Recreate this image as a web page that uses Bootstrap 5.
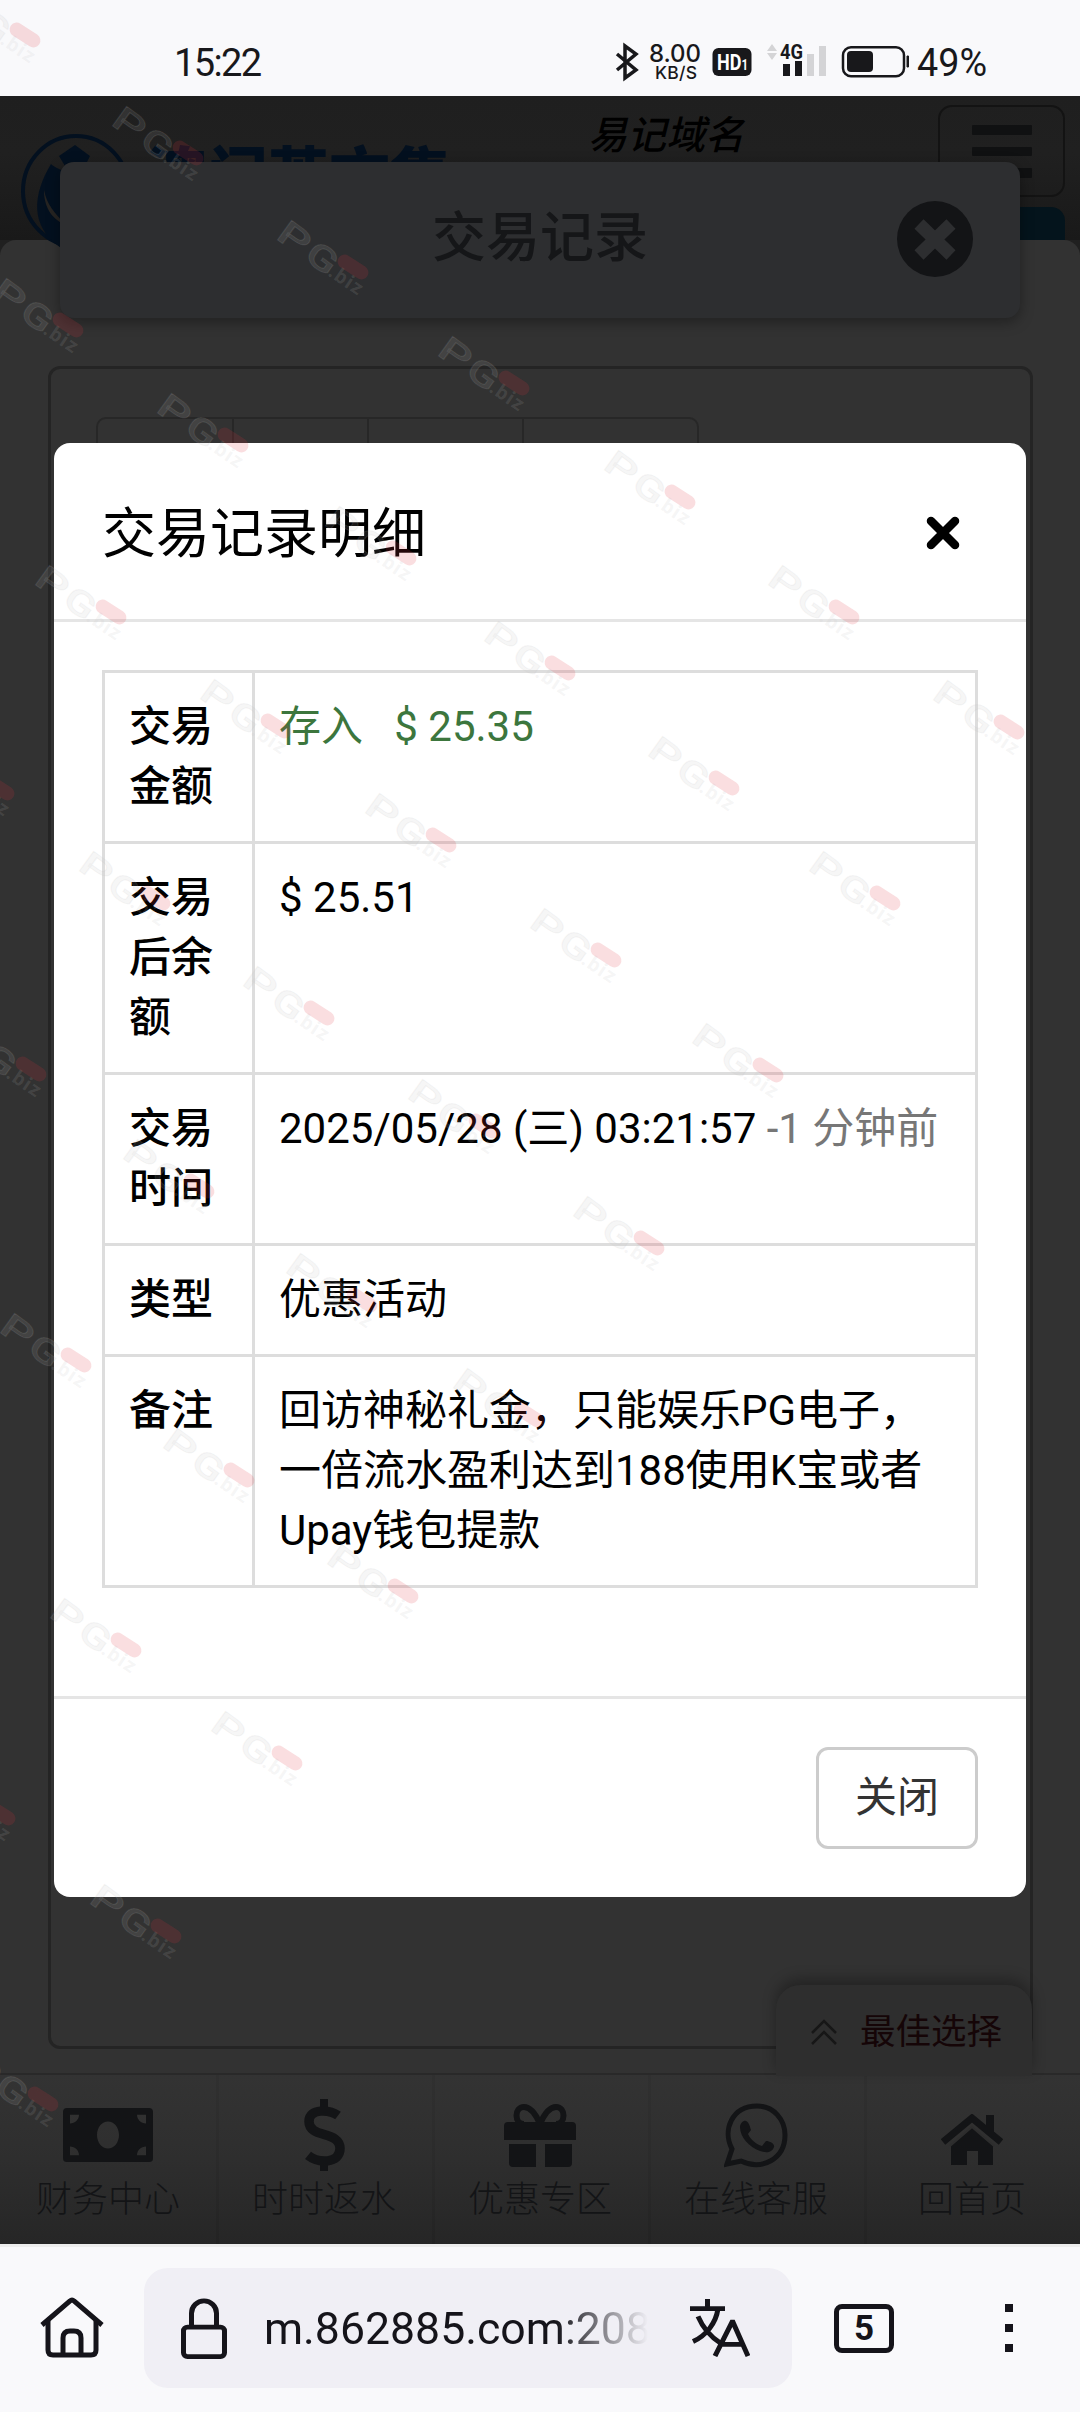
<!DOCTYPE html>
<html lang="zh-CN">
<head>
<meta charset="utf-8">
<meta name="viewport" content="width=device-width, initial-scale=1">
<title>交易记录</title>
<link href="https://cdn.jsdelivr.net/npm/bootstrap@5.3.0/dist/css/bootstrap.min.css" rel="stylesheet">
<style>
body{width:1080px;height:2412px;overflow:hidden;font-family:Roboto,"Noto Sans CJK SC",sans-serif;color:#000;background:#f9f9fb}
svg{display:block;flex:none}
.status-bar{height:96px;background:#f9f9fb;padding:0 91px 0 174px;color:#18181b}
.status-bar .clock{font-size:38px;line-height:38px;margin-top:44px;letter-spacing:-1.6px}
.page-view{height:2148px;background:#202020}
.site-head{height:144px;background:linear-gradient(#1f1f1f,#202020 40%,#191919);padding:9px 15px 0 21px}
.logo-mark{margin-top:29px}
.logo-name{font-size:61px;font-weight:900;color:#03101f;line-height:70px;margin:37px 0 0 9px;width:445px;height:72px}
.domain-tip{font-size:39px;font-style:italic;font-weight:500;line-height:44px;margin-top:9px;margin-left:-3px;white-space:nowrap;color:#000}
.menu-btn{width:127px;height:92px;border:2px solid #131313;border-radius:14px;gap:12px;padding-top:18px}
.menu-btn span{width:60px;height:9.500px;background:#101112;border-radius:1px}
.teal-tab{height:33px;width:127px;background:#04141c;border-radius:14px 14px 0 0;margin-top:10px}
.content-panel{background:#323232;border-radius:16px 16px 0 0;padding:126px 47px 0 48px;height:1833px}
.record-box{height:1683px;border:3px solid #242424;border-radius:12px;padding:48px 45px}
.filter-group{width:603px;height:112px;border:2px solid #272727;border-radius:10px}
.filter-group div+div{border-left:2px solid #272727}
.page-card{left:60px;top:162px;width:960px;height:156px;background:#2d2e30;border-radius:14px;box-shadow:0 4px 14px rgba(0,0,0,.35);padding-bottom:2px}
.page-card h1{font-size:54px;font-weight:500;line-height:60px;margin:0;color:#151618}
.page-card svg{right:46px;top:38px}
.bottom-nav{height:171px;border-top:2px solid #292929;background:linear-gradient(#333,#2e2e2e 50%,#262626);color:#131416}
.bottom-nav>div{width:216px;box-shadow:3px 0 0 rgba(0,0,0,.06)}
.bottom-nav .ico{height:105px}
.bottom-nav .lbl{font-size:36px;font-weight:300;line-height:40px}
.best-pick{left:776px;top:1985px;width:256px;height:91px;background:#2e2e2e;border-radius:24px 24px 0 0;box-shadow:0 -6px 14px rgba(0,0,0,.3);font-size:35.5px;color:#150507;gap:23px;padding:4px 0 0 35px}
.detail-modal{left:54px;top:443px;width:972px;height:1454px;background:#fff;border-radius:16px;overflow:hidden}
.detail-modal .modal-header{height:179px;padding:4px 66px 0 48px;border-bottom:3px solid #e5e5e5;border-radius:0}
.detail-modal .modal-title{font-size:54px;line-height:60px;font-weight:400;padding-top:4px}
.detail-modal .modal-body{padding:48px}
.detail-table{width:876px;margin:0 0 60px;border-collapse:collapse;font-size:42px;line-height:60px;color:#000;table-layout:fixed}
.detail-table th,.detail-table td{border:3px solid #ddd;padding:24px;vertical-align:top;font-weight:400}
.detail-table th{width:150px;font-weight:500;padding-right:20px}
.detail-modal .modal-footer{border-top:3px solid #e5e5e5;padding:48px;border-radius:0}
.close-btn{width:162px;height:102px;border:3px solid #ccc;border-radius:12px;font-size:42px;line-height:60px;color:#333;padding:0;margin:0}
.green-text{color:#3c763d}
.grey-text{color:#777}
.browser-bar{height:168px;border-top:3px solid #ededed;background:#f9f9fb;color:#15141a;padding:21px 67px 0 40px}
.url-pill{width:648px;height:120px;border-radius:24px;background:#f0eff5;margin-left:40px;padding:0 42px 0 37px}
.url-text{width:384px;overflow:hidden;font-size:44.6px;line-height:60px;margin-left:37px;padding-top:2px;white-space:nowrap;-webkit-mask-image:linear-gradient(90deg,#000 76%,transparent)}
.tab-count{width:60px;height:49px;border:5px solid #15141a;border-radius:8px;font-size:35px;font-weight:700;line-height:39px;margin:0 0 0 42px}
.menu-dots{gap:12px;margin-left:auto}
.menu-dots i{width:8px;height:8px;background:#15141a}
.brand-layer{left:0;top:0;pointer-events:none;z-index:5}
</style>
<script src="https://cdn.jsdelivr.net/npm/bootstrap@5.3.0/dist/js/bootstrap.bundle.min.js"></script>
</head>
<body class="position-relative">
<header class="status-bar d-flex justify-content-between">
  <div class="clock">15:22</div>
  <svg width="380" height="96" viewBox="610 0 380 96" fill="#18181b" font-family="Roboto,sans-serif">
    <path d="M618 54l19 16-11 8V46l11 8-19 16" fill="none" stroke="#18181b" stroke-width="3.500"/>
    <text x="650" y="62" font-family="Inter" font-weight="500" font-size="24" textLength="52">8.00</text>
    <text x="656" y="79" font-family="Inter" font-weight="500" font-size="17.500" textLength="42">KB/S</text>
    <rect x="713.500" y="48" width="39" height="28" rx="6"/>
    <text x="718" y="70" fill="#fff" font-weight="700" font-size="22" textLength="31" lengthAdjust="spacingAndGlyphs">HD<tspan font-size="14">1</tspan></text>
    <path d="M768 51l5-7 5 7zM768 53l5 7 5-7zM808 54h7v22h-7zM820 46h7v30h-7z" fill="#d4d4d6"/>
    <text x="781" y="59" font-weight="700" font-size="20" textLength="23" lengthAdjust="spacingAndGlyphs">4G</text>
    <path d="M784 64h7v12h-7zM796 61h7v15h-7z"/>
    <rect x="844" y="47.200" width="61" height="29" rx="8" fill="none" stroke="#18181b" stroke-width="2.500"/><rect x="848" y="51" width="26" height="21" rx="4"/><path d="M908 56h1.500v11H908z" stroke="#18181b"/>
    <text x="918" y="76" font-size="38" textLength="70" lengthAdjust="spacingAndGlyphs">49%</text>
  </svg>
</header>
<main class="page-view">
  <div class="site-head d-flex">
    <svg class="logo-mark" width="116" height="116" viewBox="0 0 116 116"><ellipse cx="55" cy="57" rx="53" ry="55" fill="none" stroke="#03101f" stroke-width="4"/><path d="M54 11l15 11-5 10c-6-4-14-4-20 0l-6-10z" fill="#03101f"/><path d="M30 30c-18 30-22 62 10 84h30V52c-8-12-32-14-40-22z" fill="#03101f"/><path d="M23 56c3 15 10 22 22 35-12-5-22-15-22-35z" fill="#262422"/></svg>
    <div class="logo-name">澳门英文集</div>
    <div class="domain-tip">易记域名</div>
    <div class="ms-auto">
      <div class="menu-btn d-flex flex-column align-items-center"><span></span><span></span><span></span></div>
      <div class="teal-tab"></div>
    </div>
  </div>
  <div class="content-panel">
    <div class="record-box d-flex align-items-start"><div class="filter-group d-flex"><div style="width:134px"></div><div style="width:135px"></div><div style="width:155px"></div><div class="flex-fill"></div></div></div>
  </div>
  <nav class="bottom-nav d-flex text-center">
    <div><div class="ico d-flex justify-content-center" style="padding-top:33px"><svg width="90" height="54" viewBox="0 0 90 56" preserveAspectRatio="none"><path fill-rule="evenodd" fill="#131416" d="M4 0h82a4 4 0 0 1 4 4v48a4 4 0 0 1-4 4H4a4 4 0 0 1-4-4V4a4 4 0 0 1 4-4zM45 14c-6 0-11 6-11 14s5 14 11 14 11-6 11-14-5-14-11-14zM7 7v9c5 0 9-4 9-9zM83 7v9c-5 0-9-4-9-9zM7 49v-9c5 0 9 4 9 9zM83 49v-9c-5 0-9 4-9 9z"/></svg></div><div class="lbl">财务中心</div></div>
    <div><div class="ico d-flex justify-content-center" style="padding-top:24px"><svg width="42" height="72" viewBox="0 0 42 74" preserveAspectRatio="none"><path d="M35 17C27 11 6 9 6 23c0 18 31 9 31 28 0 16-22 15-32 7" fill="none" stroke="#131416" stroke-width="9.500"/><path d="M17 0h8v14h-8zM17 60h8v14h-8z" fill="#131416"/></svg></div><div class="lbl">时时返水</div></div>
    <div><div class="ico d-flex justify-content-center" style="padding-top:25px"><svg width="72" height="74" viewBox="0 0 72 74"><g fill="none" stroke="#131416" stroke-width="6"><path d="M36 24C30 10 24 7 20 7c-10 0-10 17 0 17M36 24C42 10 48 7 52 7c10 0 10 17 0 17"/></g><path d="M4 22h64a4 4 0 0 1 4 4v14H0V26a4 4 0 0 1 4-4zM5 44h27v23H9a4 4 0 0 1-4-4zM41 44h27v19a4 4 0 0 1-4 4H41z" fill="#131416"/></svg></div><div class="lbl">优惠专区</div></div>
    <div><div class="ico d-flex justify-content-center" style="padding-top:28px"><svg width="64" height="66" viewBox="0 0 64 66"><path d="M3 61l5-15C-2 27 8 3 33 3c17 0 28 14 28 29 0 24-23 36-44 26z" fill="none" stroke="#131416" stroke-width="5"/><path d="M16 24c0-4 4-7 6-6 3 1 4 6 5 9l-3 4c3 6 8 10 14 12l4-5c4 0 9 3 8 6-2 6-8 6-14 4-11-4-20-14-20-24z" fill="#131416"/></svg></div><div class="lbl">在线客服</div></div>
    <div><div class="ico d-flex justify-content-center" style="padding-top:39px"><svg width="62" height="52" viewBox="0 0 62 52"><path d="M2 28L31 4l29 24" fill="none" stroke="#131416" stroke-width="7"/><path d="M45 1h8v20l-8-7zM10 31l21-18 21 18v20H37V37H26v14H10z" fill="#131416"/><path d="M9 32l22-19 22 19" fill="none" stroke="#2d2d2d" stroke-width="2"/></svg></div><div class="lbl">回首页</div></div>
  </nav>
</main>
<footer class="browser-bar d-flex align-items-start">
  <svg width="64" height="120" viewBox="0 0 64 120" fill="none" stroke="#15141a" stroke-width="5"><path d="M2 57l28-24q2-2 4 0l28 24"/><path d="M8 53v29q0 5 5 5h38q5 0 5-5V53M23 87V70q0-7 7-7h4q7 0 7 7v17"/></svg>
  <div class="url-pill d-flex align-items-center">
    <svg width="46" height="61" viewBox="0 0 46 64" preserveAspectRatio="none" fill="none" stroke="#15141a" stroke-width="5"><rect x="2.500" y="30.500" width="41" height="31" rx="4"/><path d="M10.500 30V16a12.500 13 0 0 1 25 0v14"/></svg>
    <div class="url-text">m.862885.com:2083</div>
    <svg class="ms-auto" width="60" height="58" viewBox="0 0 60 60" preserveAspectRatio="none" fill="none" stroke="#15141a" stroke-width="5"><path d="M0 10h35M17.500 0v10M28 10C26 25 16 38 3 44M8 18c5 12 12 21 23 28M25 59l17-35h1l15 35M32 47h22"/></svg>
  </div>
  <div class="d-flex align-items-center flex-fill" style="height:120px"><div class="tab-count text-center">5</div><div class="menu-dots d-flex flex-column"><i></i><i></i><i></i></div></div>
</footer>

<div class="page-card position-absolute d-flex align-items-center justify-content-center"><h1>交易记录</h1>
  <svg class="position-absolute" width="78" height="78" viewBox="0 0 78 78"><circle cx="39" cy="39" r="38" fill="#131416"/><path d="M23 24l32 31M55 24L23 55" stroke="#2d2e30" stroke-width="13"/></svg>
</div>
<div class="best-pick position-absolute d-flex align-items-center"><svg width="26" height="28" viewBox="0 0 26 28" fill="none" stroke="#171717" stroke-width="2.500"><path d="M1 14L13 2l12 12M1 25l12-12 12 12"/></svg><span>最佳选择</span></div>

<section class="detail-modal position-absolute" role="dialog">
  <div class="modal-header d-flex justify-content-between align-items-center"><h2 class="modal-title">交易记录明细</h2><svg width="34" height="34" viewBox="0 0 34 34"><path d="M5 5l24 24M29 5L5 29" stroke="#000" stroke-width="8.500" stroke-linecap="round"/></svg></div>
  <div class="modal-body">
    <table class="detail-table">
      <tr><th>交易金额</th><td class="green-text">存入 &nbsp; $ 25.35</td></tr>
      <tr><th>交易后余额</th><td>$ 25.51</td></tr>
      <tr><th>交易时间</th><td class="text-nowrap">2025/05/28 (三) 03:21:57 <span class="grey-text">-1 分钟前</span></td></tr>
      <tr><th>类型</th><td>优惠活动</td></tr>
      <tr><th>备注</th><td>回访神秘礼金，只能娱乐PG电子，一倍流水盈利达到188使用K宝或者Upay钱包提款</td></tr>
    </table>
  </div>
  <div class="modal-footer d-flex justify-content-end"><button type="button" class="btn close-btn">关闭</button></div>
</section>

<svg class="brand-layer position-absolute" width="1080" height="2412" viewBox="0 0 1080 2412">
  <defs><g id="mark-pg" font-family="Roboto,sans-serif" font-weight="500" fill="#bebebe" fill-opacity=".15">
    <g transform="translate(-16 20) rotate(36)" stroke="#bebebe" stroke-opacity=".12" stroke-width="1"><text transform="translate(-2 0) scale(1.5 1)" font-size="34">P</text><text transform="translate(33 0) scale(1.35 1)" font-size="34">G</text></g>
    <text transform="translate(35 56) rotate(34)" font-size="20" font-weight="700" letter-spacing="1.500">.biz</text>
    <rect x="-17" y="-7" width="34" height="14" rx="7" transform="translate(61 48) rotate(33)" fill="#e03040" fill-opacity=".16"/></g></defs>
</svg>
<script>
const layer=document.querySelector('.brand-layer');
[[-34,-13],[129,105],[294,219],[455,335],[9,277],[174,392],[342,505],[621,449],[785,564],[950,679],[501,620],[665,735],[826,850],[52,564],[217,678],[382,792],[547,907],[709,1022],[-60,740],[96,850],[260,965],[425,1078],[590,1195],[-28,1021],[140,1138],[303,1252],[470,1367],[17,1312],[180,1427],[344,1543],[67,1597],[228,1710],[-59,1765],[107,1883],[-16,2051]].forEach(([x,y])=>{
  const u=document.createElementNS('http://www.w3.org/2000/svg','use');
  u.setAttribute('href','#mark-pg');u.setAttribute('x',x-2);u.setAttribute('y',y);layer.appendChild(u);
});
</script>
</body>
</html>
